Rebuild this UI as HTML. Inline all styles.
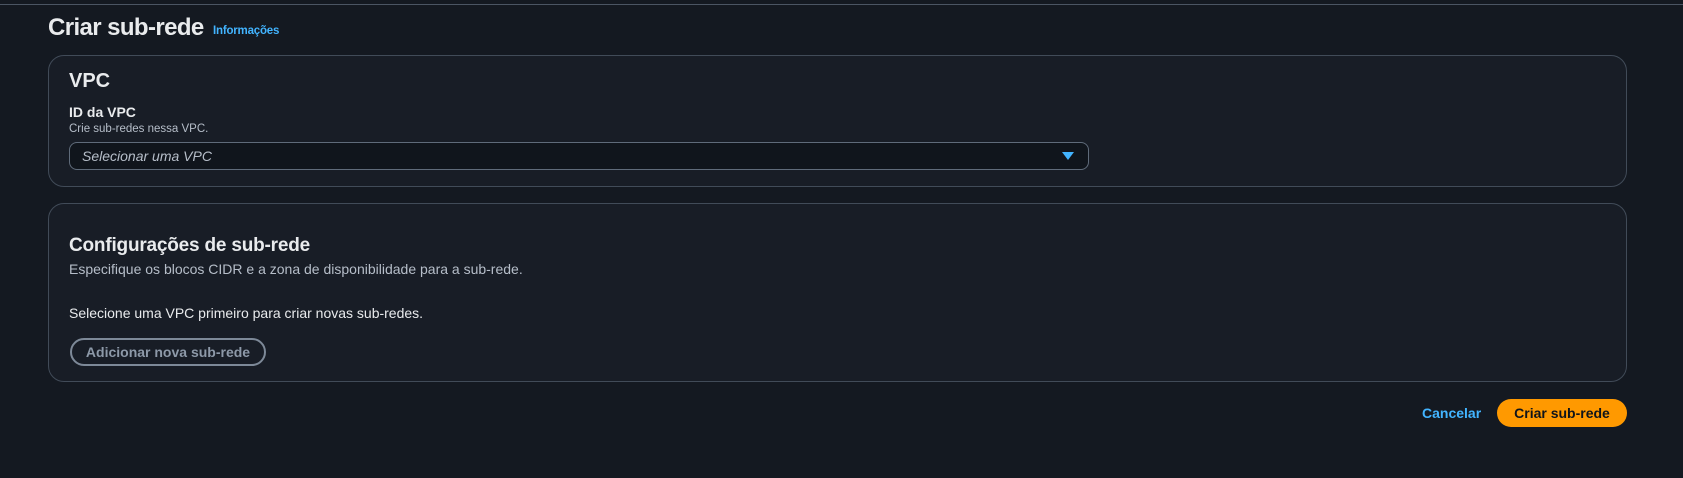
<!DOCTYPE html>
<html><head><meta charset="utf-8"><style>
*{box-sizing:border-box;margin:0;padding:0}
body{width:1683px;height:478px;background:#141921;font-family:"Liberation Sans",sans-serif;color:#e9ebed;position:relative;overflow:hidden}
.abs{position:absolute;white-space:nowrap}
.topline{position:absolute;left:0;top:4px;width:1683px;height:1px;background:#4b5563}
.panel{position:absolute;left:48px;width:1579px;border:1px solid #414b58;border-radius:16px;background:#181d26}
</style></head><body>
<div class="topline"></div>
<div class="abs" style="left:48px;top:14px;font-size:24px;font-weight:bold;letter-spacing:-0.6px">Criar sub-rede</div>
<div class="abs" style="left:213px;top:25px;font-size:11.5px;font-weight:bold;color:#42b4ff;letter-spacing:-0.2px">Informações</div>

<div class="panel" style="top:55px;height:132px"></div>
<div class="abs" style="left:69px;top:70px;font-size:20px;font-weight:bold">VPC</div>
<div class="abs" style="left:69px;top:104px;font-size:14px;font-weight:bold">ID da VPC</div>
<div class="abs" style="left:69px;top:123px;font-size:11.5px;color:#b6bec9">Crie sub-redes nessa VPC.</div>
<div style="position:absolute;left:69px;top:142px;width:1020px;height:28px;border:1px solid #5f6b7a;border-radius:8px;background:#10151c"></div>
<div class="abs" style="left:82px;top:148px;font-size:14px;font-style:italic;color:#b6bec9">Selecionar uma VPC</div>
<svg style="position:absolute;left:1062px;top:152px" width="12" height="8"><path d="M0 0H12L6 8Z" fill="#42b4ff"/></svg>

<div class="panel" style="top:203px;height:179px"></div>
<div class="abs" style="left:69px;top:235px;font-size:19px;font-weight:bold;letter-spacing:-0.2px">Configurações de sub-rede</div>
<div class="abs" style="left:69px;top:261px;font-size:14px;color:#b6bec9">Especifique os blocos CIDR e a zona de disponibilidade para a sub-rede.</div>
<div class="abs" style="left:69px;top:305px;font-size:14px">Selecione uma VPC primeiro para criar novas sub-redes.</div>
<div style="position:absolute;left:70px;top:338px;width:196px;height:28px;border:2px solid #7d8998;border-radius:14px"></div>
<div class="abs" style="left:70px;top:344px;width:196px;text-align:center;font-size:14px;font-weight:bold;color:#8d99a8">Adicionar nova sub-rede</div>

<div class="abs" style="left:1422px;top:405px;font-size:14px;font-weight:bold;color:#42b4ff">Cancelar</div>
<div style="position:absolute;left:1497px;top:399px;width:130px;height:28px;border-radius:14px;background:#ff9900"></div>
<div class="abs" style="left:1497px;top:405px;width:130px;text-align:center;font-size:14px;font-weight:bold;color:#0f141a">Criar sub-rede</div>
</body></html>
